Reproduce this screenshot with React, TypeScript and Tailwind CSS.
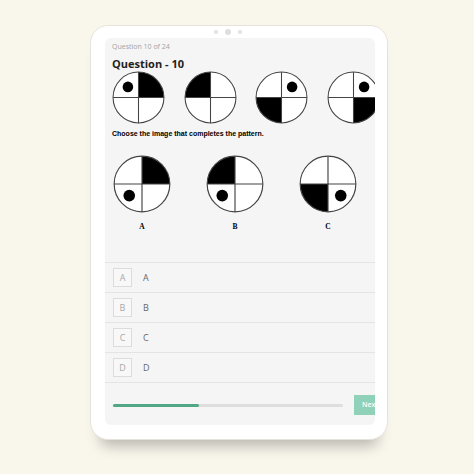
import React from "react";

type Q = "TL" | "TR" | "BL" | "BR";

const quadPath: Record<Q, string> = {
  TR: "M50,50 L50,2 A48,48 0 0 1 98,50 Z",
  TL: "M50,50 L2,50 A48,48 0 0 1 50,2 Z",
  BL: "M50,50 L50,98 A48,48 0 0 1 2,50 Z",
  BR: "M50,50 L98,50 A48,48 0 0 1 50,98 Z",
};

const dotPos: Record<Q, [number, number]> = {
  TL: [30, 30],
  TR: [70, 30],
  BL: [28, 70],
  BR: [72, 70],
};

function Pie({ size, fill, dot }: { size: number; fill: Q; dot?: Q }) {
  return (
    <svg width={size} height={size} viewBox="0 0 100 100" className="block shrink-0">
      <circle cx="50" cy="50" r="48" fill="#fff" />
      <path d={quadPath[fill]} fill="#000" />
      <line x1="50" y1="2" x2="50" y2="98" stroke="#444" strokeWidth="2" />
      <line x1="2" y1="50" x2="98" y2="50" stroke="#444" strokeWidth="2" />
      <circle cx="50" cy="50" r="48" fill="none" stroke="#444" strokeWidth="2" />
      {dot && <circle cx={dotPos[dot][0]} cy={dotPos[dot][1]} r="10" fill="#000" />}
    </svg>
  );
}

const sans = { fontFamily: '"Open Sans", "Liberation Sans", sans-serif' };

export default function App() {
  const options = ["A", "B", "C", "D"];
  return (
    <div className="w-[474px] h-[474px] bg-[#f9f6ec] pt-[25px] pl-[90px] overflow-hidden">
      <div className="w-[298px] h-[415px] bg-white rounded-[18px] border-[1.5px] border-[#e6e3db] shadow-[0_16px_14px_-10px_rgba(0,0,0,0.26)] flex flex-col">
        <div className="h-[12px] flex items-center pl-[123px] gap-[7px]">
          <div className="w-[4px] h-[4px] rounded-full bg-[#e2e2e2]" />
          <div className="w-[6px] h-[6px] rounded-full bg-[#dedede]" />
          <div className="w-[4px] h-[4px] rounded-full bg-[#e2e2e2]" />
        </div>
        <div className="ml-[14px] w-[270px] h-[387px] bg-[#f5f5f5] rounded-[6px] overflow-hidden flex flex-col" style={sans}>
          <div className="pl-[7px] pt-[4px]">
            <div className="text-[7px] leading-[10px] text-[#a3a3a3]">Question 10 of 24</div>
            <div className="mt-[5px] text-[11px] leading-[14px] font-bold text-[#222]">Question - 10</div>
            <div className="flex gap-[18.5px] w-max">
              <Pie size={53} fill="TR" dot="TL" />
              <Pie size={53} fill="TL" />
              <Pie size={53} fill="BL" dot="TR" />
              <Pie size={53} fill="BR" dot="TR" />
            </div>
            <div
              className="mt-[5px] text-[7px] leading-[10px] font-bold text-black"
              style={{ fontFamily: '"Liberation Sans", Arial, sans-serif' }}
            >
              Choose the image that completes the pattern.
            </div>
            <div className="mt-[16px] pl-[1px] flex gap-[35px]">
              {[
                { l: "A", f: "TR" as Q, d: "BL" as Q },
                { l: "B", f: "TL" as Q, d: "BL" as Q },
                { l: "C", f: "BL" as Q, d: "BR" as Q },
              ].map((o) => (
                <div key={o.l} className="w-[58px] flex flex-col items-center">
                  <Pie size={58} fill={o.f} dot={o.d} />
                  <div
                    className="mt-[9px] text-[7.5px] leading-[10px] font-bold text-black"
                    style={{ fontFamily: '"Liberation Serif", "Times New Roman", serif' }}
                  >
                    {o.l}
                  </div>
                </div>
              ))}
            </div>
          </div>
          <div className="mt-[30px] border-t border-[#e4e4e4]">
            {options.map((o) => (
              <div key={o} className="h-[30px] border-b border-[#e4e4e4] flex items-center pl-[8px]">
                <div className="w-[19px] h-[19px] border border-[#dcdcdc] bg-[#f8f8f8] flex items-center justify-center text-[9px] text-[#a8a8a8]">
                  {o}
                </div>
                <div className="ml-[11px] text-[9px] text-[#666]">{o}</div>
              </div>
            ))}
          </div>
          <div className="pl-[8px] pt-[12px] flex items-center w-max">
            <div className="w-[230px] h-[3px] bg-[#dedede] rounded-full">
              <div className="h-[3px] bg-[#52a884] rounded-full" style={{ width: "37.5%" }} />
            </div>
            <div className="ml-[11px] w-[40px] h-[20px] bg-[#8fd1b9] text-white text-[7px] font-semibold flex items-center pl-[8px]">
              Next
            </div>
          </div>
        </div>
      </div>
    </div>
  );
}
